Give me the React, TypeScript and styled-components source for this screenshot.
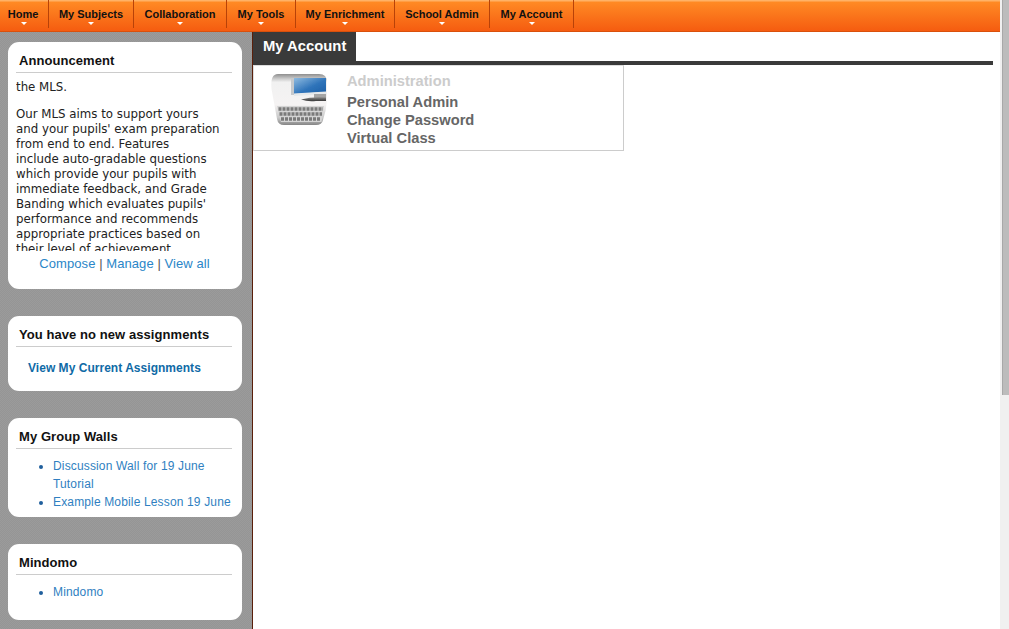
import React from "react";
import styled, { createGlobalStyle } from "styled-components";

const Global = createGlobalStyle`
  html, body { margin: 0; padding: 0; height: 100%; overflow: hidden; background: #fff; }
  body { font-family: "Liberation Sans", Arial, sans-serif; }
`;

const Page = styled.div`
  width: 1009px;
  height: 629px;
  display: flex;
  overflow: hidden;
`;

const Main = styled.div`
  width: 1000px;
  display: flex;
  flex-direction: column;
`;

/* scrollbar */
const Track = styled.div`
  width: 7px;
  padding-left: 2px;
  background: #f0f0f0;
`;
const Thumb = styled.div`
  height: 395px;
  background: #bcbcbc;
  border-left: 1px solid #a8a8a8;
  box-sizing: border-box;
`;

/* top nav */
const Nav = styled.nav`
  height: 31px;
  flex: none;
  display: flex;
  box-sizing: content-box;
  background: linear-gradient(180deg, #ffb266 0, #ffb266 1px, #ff8a24 2px, #f55c10 100%);
  border-bottom: 1px solid #d9500c;
`;
const NavItem = styled.a<{ $w: number }>`
  position: relative;
  width: ${(p) => p.$w}px;
  height: 28px;
  box-sizing: border-box;
  display: flex;
  justify-content: center;
  padding-top: 8px;
  font-size: 11px;
  font-weight: 700;
  line-height: 13px;
  color: #111;
  border-right: 1px solid #b84208;
  &:first-child { padding-right: 2px; }
  &::after {
    content: "";
    position: absolute;
    left: 50%;
    margin-left: -3px;
    top: 22px;
    border-left: 3px solid transparent;
    border-right: 3px solid transparent;
    border-top: 3px solid #fff;
  }
`;

const Body = styled.div`
  flex: 1;
  display: flex;
  min-height: 0;
`;

/* left column */
const Side = styled.aside`
  width: 252px;
  flex: none;
  box-sizing: content-box;
  padding: 10px 0 0 0;
  display: flex;
  flex-direction: column;
  gap: 27px;
  background-color: #999;
  background-image: repeating-conic-gradient(#959595 0 25%, #9b9b9b 0 50%);
  background-size: 2px 2px;
  border-right: 1px solid #5a1f0a;
`;
const Card = styled.section<{ $h: number }>`
  width: 234px;
  height: ${(p) => p.$h}px;
  flex: none;
  margin-left: 8px;
  box-sizing: border-box;
  padding: 0 10px 0 8px;
  background: #fff;
  border-radius: 11px;
  overflow: hidden;
`;
const CardTitle = styled.h3`
  margin: 0;
  height: 31px;
  box-sizing: border-box;
  padding: 11px 0 0 3px;
  font-size: 13px;
  line-height: 15px;
  font-weight: 700;
  letter-spacing: 0.07px;
  color: #111;
  border-bottom: 1px solid #ccc;
`;
const Scroller = styled.div`
  height: 171px;
  overflow: hidden;
  padding-top: 7px;
  box-sizing: content-box;
  font-family: "DejaVu Sans", Verdana, sans-serif;
  font-size: 11.8px;
  line-height: 15px;
  color: #222;
  p { margin: 0 0 12px; }
`;
const CardLinks = styled.div`
  text-align: center;
  font-size: 13px;
  line-height: 16px;
  margin-top: 5px;
  padding-left: 1px;
  letter-spacing: 0.07px;
  color: #555;
  a { color: #2a86c8; }
`;
const StrongLink = styled.a`
  display: block;
  padding: 13px 0 0 12px;
  font-size: 12px;
  line-height: 16px;
  font-weight: 700;
  letter-spacing: 0.03px;
  color: #0f6aa6;
`;
const LinkList = styled.ul`
  margin: 0;
  padding: 8px 0 0 37px;
  font-size: 12px;
  line-height: 18px;
  letter-spacing: 0.15px;
  color: #1f5f9c;
  a { color: #2f7fc1; white-space: nowrap; }
`;

/* right content */
const Content = styled.main`
  flex: 1;
  padding-right: 7px;
  min-width: 0;
`;
const TabBar = styled.div`
  border-bottom: 4px solid #3a3a3a;
  height: 29px;
  display: flex;
`;
const Tab = styled.div`
  width: 103px;
  box-sizing: border-box;
  padding: 6px 0 0 10px;
  background: #3a3a3a;
  color: #fff;
  font-size: 14.8px;
  line-height: 16px;
  font-weight: 700;
`;
const Panel = styled.div`
  width: 371px;
  height: 86px;
  box-sizing: border-box;
  border: 1px solid #ccc;
  border-left-color: #ddd;
  border-top-color: #ddd;
  display: flex;
  padding: 6px 0 0 16px;
  gap: 19px;
`;
const MenuText = styled.div`
  display: flex;
  flex-direction: column;
  font-size: 14.7px;
  line-height: 18px;
  font-weight: 700;
  color: #666;
`;
const MenuHead = styled.div`
  color: #ccc;
  margin-bottom: 3px;
`;
const IconSvg = styled.svg`
  flex: none;
  margin-top: 1px;
`;

const ComputerIcon = () => (
  <IconSvg width="58" height="54" viewBox="0 0 58 54">
    <defs>
      <linearGradient id="bodyG" x1="0" y1="0" x2="0" y2="1">
        <stop offset="0" stopColor="#8e8e8e" />
        <stop offset="0.09" stopColor="#c9c9c9" />
        <stop offset="0.16" stopColor="#f1f1f1" />
        <stop offset="0.6" stopColor="#f5f3f3" />
        <stop offset="0.86" stopColor="#c8c8c8" />
        <stop offset="1" stopColor="#858585" />
      </linearGradient>
      <linearGradient id="screenG" x1="0" y1="0" x2="1" y2="1">
        <stop offset="0" stopColor="#8fbbe0" />
        <stop offset="0.55" stopColor="#2f74ba" />
        <stop offset="1" stopColor="#1d5ea6" />
      </linearGradient>
      <linearGradient id="standG" x1="0" y1="0" x2="0" y2="1">
        <stop offset="0" stopColor="#8a8a8a" />
        <stop offset="1" stopColor="#333" />
      </linearGradient>
      <filter id="soft" x="-5%" y="-5%" width="110%" height="110%">
        <feGaussianBlur stdDeviation="0.35" />
      </filter>
    </defs>
    <g filter="url(#soft)">
      <path d="M8 1 H49 Q57 1 57 9 V22 Q57 30 55.5 38 L53 47 Q52 52 46 52 H14 Q8 52 7 46 L1.5 16 Q0 1 8 1 Z" fill="url(#bodyG)" />
      <path d="M21 5 H24 V22 H21 Z" fill="#c6c9cc" />
      <path d="M24 5 H56 V19 L24 21 Z" fill="url(#screenG)" />
      <path d="M24 20.5 L56 18.5 V21 L24 23 Z" fill="#e6e9eb" />
      <path d="M44 21 H56 V25 H44 Z" fill="#a5a5a5" />
      <path d="M31 26.5 Q42 23.5 56 24.5 V28 H46 Q38 29 31 26.5 Z" fill="url(#standG)" />
      <path d="M7 33 H54 L51.5 49 H11 Z" fill="#d4d4d4" />
      <path d="M8.5 36 H53 M9.5 41 H52 M11 46 H51" stroke="#7a7a7a" strokeWidth="3.4" strokeDasharray="3 1" fill="none" />
    </g>
  </IconSvg>
);

const navItems: [string, number][] = [
  ["Home", 49], ["My Subjects", 85], ["Collaboration", 93], ["My Tools", 69],
  ["My Enrichment", 99], ["School Admin", 95], ["My Account", 84],
];

export default function App() {
  return (
    <Page>
      <Global />
      <Main>
        <Nav>
          {navItems.map(([n, w]) => (
            <NavItem key={n} $w={w}>{n}</NavItem>
          ))}
        </Nav>
        <Body>
          <Side>
            <Card $h={247}>
              <CardTitle>Announcement</CardTitle>
              <Scroller>
                <p>the MLS.</p>
                <p>
                  Our MLS aims to support yours<br />
                  and your pupils' exam preparation<br />
                  from end to end. Features<br />
                  include auto-gradable questions<br />
                  which provide your pupils with<br />
                  immediate feedback, and Grade<br />
                  Banding which evaluates pupils'<br />
                  performance and recommends<br />
                  appropriate practices based on<br />
                  their level of achievement.
                </p>
              </Scroller>
              <CardLinks>
                <a>Compose</a> | <a>Manage</a> | <a>View all</a>
              </CardLinks>
            </Card>
            <Card $h={75}>
              <CardTitle>You have no new assignments</CardTitle>
              <StrongLink>View My Current Assignments</StrongLink>
            </Card>
            <Card $h={99}>
              <CardTitle>My Group Walls</CardTitle>
              <LinkList>
                <li><a>Discussion Wall for 19 June<br />Tutorial</a></li>
                <li><a>Example Mobile Lesson 19 June</a></li>
              </LinkList>
            </Card>
            <Card $h={76}>
              <CardTitle>Mindomo</CardTitle>
              <LinkList>
                <li><a>Mindomo</a></li>
              </LinkList>
            </Card>
          </Side>
          <Content>
            <TabBar>
              <Tab>My Account</Tab>
            </TabBar>
            <Panel>
              <ComputerIcon />
              <MenuText>
                <MenuHead>Administration</MenuHead>
                <span>Personal Admin</span>
                <span>Change Password</span>
                <span>Virtual Class</span>
              </MenuText>
            </Panel>
          </Content>
        </Body>
      </Main>
      <Track>
        <Thumb />
      </Track>
    </Page>
  );
}
